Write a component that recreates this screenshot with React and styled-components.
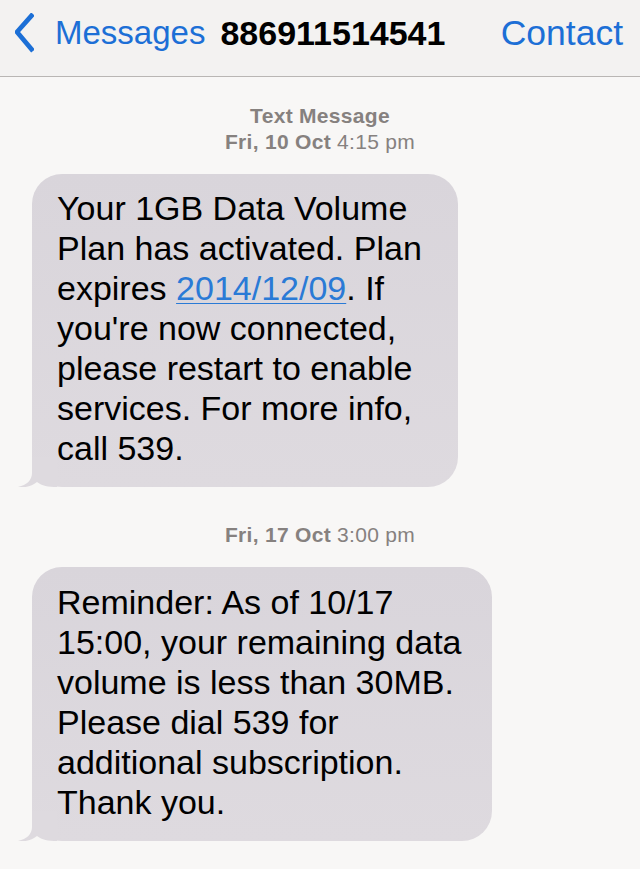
import styled, { createGlobalStyle } from "styled-components";

const GlobalStyle = createGlobalStyle`
  html, body {
    margin: 0;
    padding: 0;
    background-color: #f8f7f6;
    font-family: "Liberation Sans", Arial, sans-serif;
  }
`;

const Screen = styled.div`
  width: 640px;
  min-height: 869px;
  background-color: #f8f7f6;
`;

const NavBar = styled.div`
  height: 77px;
  box-sizing: border-box;
  padding: 0 17px 10px 15px;
  display: flex;
  align-items: center;
  background-color: #f3f2f1;
  border-bottom: 1px solid #b9b6b4;
  font-size: 33px;
`;

const BackBtn = styled.div`
  display: flex;
  align-items: center;
  color: #1c6fd6;
`;

const BackLabel = styled.span`
  margin-left: 21px;
`;

const Title = styled.span`
  margin-left: 15px;
  font-weight: bold;
  font-size: 34px;
  color: #000000;
`;

const ContactBtn = styled.span`
  margin-left: auto;
  color: #1c6fd6;
  font-size: 35.5px;
`;

const Thread = styled.div`
  padding: 26px 0 40px;
  display: flex;
  flex-direction: column;
`;

const Stamp = styled.div`
  margin-top: ${(p) => p.$top}px;
  text-align: center;
  font-size: 21px;
  letter-spacing: 0.3px;
  line-height: 26px;
  color: #86817f;
  b {
    font-weight: bold;
  }
`;

const Bubble = styled.div`
  position: relative;
  box-sizing: border-box;
  width: ${(p) => p.$width}px;
  margin: ${(p) => p.$top}px 0 0 32px;
  padding: ${(p) => p.$padTop}px 20px 19px 25px;
  background: linear-gradient(180deg, #d9d5db 0%, #dedadf 100%);
  border-radius: 30px;
  color: #000000;
  font-size: 34px;
  line-height: 40px;
`;

const Tail = styled.svg`
  position: absolute;
  left: -15px;
  bottom: 0;
  width: 40px;
  height: 30px;
`;

const DateLink = styled.span`
  color: #2a7ad6;
  text-decoration: underline;
  text-underline-offset: 3px;
  text-decoration-thickness: 1px;
`;

const BubbleTail = () => (
  <Tail viewBox="0 0 40 30">
    <path
      d="M15 0 L15 16 C15 23 10 28 1 30 C9 31 15 29 20 25 C25 29 31 30 40 30 L40 0 Z"
      fill="#dedadf"
    />
  </Tail>
);

export default function App() {
  return (
    <>
      <GlobalStyle />
      <Screen>
        <NavBar>
          <BackBtn>
            <svg width="19" height="40" viewBox="0 0 19 40">
              <polyline
                points="18,1 2,19 18,38"
                fill="none"
                stroke="#1c6fd6"
                strokeWidth="4.8"
                strokeLinecap="butt"
                strokeLinejoin="miter"
              />
            </svg>
            <BackLabel>Messages</BackLabel>
          </BackBtn>
          <Title>886911514541</Title>
          <ContactBtn>Contact</ContactBtn>
        </NavBar>
        <Thread>
          <Stamp $top={0}>
            <b>Text Message</b>
            <br />
            <b>Fri, 10 Oct</b> 4:15 pm
          </Stamp>
          <Bubble $width={426} $top={19} $padTop={14}>
            Your 1GB Data Volume
            <br />
            Plan has activated. Plan
            <br />
            expires <DateLink>2014/12/09</DateLink>. If
            <br />
            you're now connected,
            <br />
            please restart to enable
            <br />
            services. For more info,
            <br />
            call 539.
            <BubbleTail />
          </Bubble>
          <Stamp $top={35}>
            <b>Fri, 17 Oct</b> 3:00 pm
          </Stamp>
          <Bubble $width={460} $top={19} $padTop={15}>
            Reminder: As of 10/17
            <br />
            15:00, your remaining data
            <br />
            volume is less than 30MB.
            <br />
            Please dial 539 for
            <br />
            additional subscription.
            <br />
            Thank you.
            <BubbleTail />
          </Bubble>
        </Thread>
      </Screen>
    </>
  );
}
